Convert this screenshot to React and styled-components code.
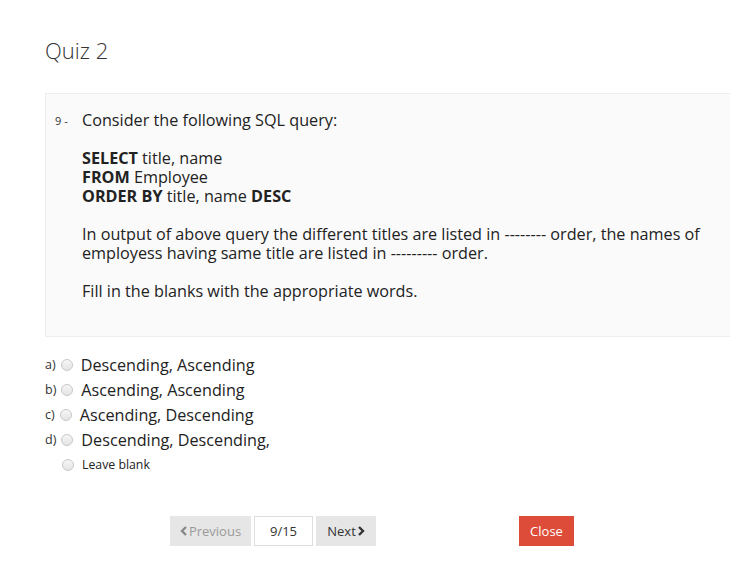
import React, { useState } from 'react';
import styled, { createGlobalStyle } from 'styled-components';

const GlobalStyle = createGlobalStyle`
    html, body {
        margin: 0;
        padding: 0;
        background: #fff;
        overflow-x: hidden;
    }
    body {
        font-family: 'Open Sans', 'Liberation Sans', sans-serif;
        color: #333;
    }
`;

const Page = styled.div`
    padding: 34px 0 0 45px;
`;

const Title = styled.h1`
    margin: 0;
    font: 300 22px/32px 'Open Sans', sans-serif;
    color: #333;
`;

const Panel = styled.div`
    margin-top: 27px;
    margin-right: -20px;
    background: #fafafa;
    border: 1px solid #eeeeee;
    padding: 17px 0 35px 9px;
    display: flex;
`;

const Number = styled.div`
    width: 27px;
    flex-shrink: 0;
    font-size: 11px;
    line-height: 19px;
    color: #333;
`;

const Body = styled.div`
    font-size: 16.2px;
    line-height: 19px;
    color: #222;
    padding-right: 40px;
    p {
        margin: 0 0 19px;
    }
    p:last-child {
        margin-bottom: 0;
    }
    b {
        font-weight: 700;
    }
`;

const Options = styled.div`
    margin-top: 15px;
    display: flex;
    flex-direction: column;
`;

const Option = styled.label`
    display: flex;
    align-items: center;
    height: 25px;
    cursor: pointer;
`;

const Letter = styled.span`
    font-size: 12.5px;
    color: #333;
    margin-right: 5px;
    width: ${p => p.$w || 'auto'};
`;

const Radio = styled.span`
    width: 12px;
    height: 12px;
    border-radius: 50%;
    box-sizing: border-box;
    border: 1px solid #c8c8c8;
    background: ${p => p.$on ? 'radial-gradient(circle, #555 0 3px, #f0f0f0 3.5px)' : 'linear-gradient(#f6f6f6, #e4e4e4)'};
    flex-shrink: 0;
`;

const OptText = styled.span`
    margin-left: 8px;
    font-size: ${p => p.$small ? '12.3px' : '16.2px'};
    color: #222;
`;

const Footer = styled.div`
    margin-top: 39px;
    padding-left: 125px;
    display: flex;
    align-items: center;
`;

const NavButton = styled.button`
    height: 30px;
    width: ${p => p.$w};
    padding: 0;
    border: none;
    background: #e6e6e6;
    color: ${p => p.$disabled ? '#9a9a9a' : '#333'};
    font: 400 13px 'Open Sans', sans-serif;
    display: flex;
    align-items: center;
    justify-content: center;
    gap: 1px;
    margin-right: 3px;
    cursor: ${p => p.$disabled ? 'default' : 'pointer'};
`;

const Counter = styled.div`
    height: 30px;
    width: 59px;
    box-sizing: border-box;
    border: 1px solid #dddddd;
    background: #fff;
    font-size: 13px;
    color: #333;
    display: flex;
    align-items: center;
    justify-content: center;
    margin-right: 3px;
`;

const CloseButton = styled.button`
    margin-left: 140px;
    height: 30px;
    width: 55px;
    padding: 0;
    border: none;
    background: #dd4b39;
    color: #fff;
    font: 400 13px 'Open Sans', sans-serif;
    cursor: pointer;
`;

const Chevron = ({ dir, color }) => (
    <svg width="8" height="10" viewBox="0 0 8 10">
        <path
            d={dir === 'left' ? 'M6 1 L2 5 L6 9' : 'M2 1 L6 5 L2 9'}
            fill="none"
            stroke={color}
            strokeWidth="2.4"
        />
    </svg>
);

const options = [
    { l: 'a)', t: 'Descending, Ascending' },
    { l: 'b)', t: 'Ascending, Ascending' },
    { l: 'c)', t: 'Ascending, Descending' },
    { l: 'd)', t: 'Descending, Descending,' },
];

const App = () => {
    const [picked, setPicked] = useState(null);

    return (
        <>
            <GlobalStyle />
            <Page>
                <Title>Quiz 2</Title>
                <Panel>
                    <Number>9 -</Number>
                    <Body>
                        <p>Consider the following SQL query:</p>
                        <p>
                            <b>SELECT</b> title, name<br />
                            <b>FROM</b> Employee<br />
                            <b>ORDER BY</b> title, name <b>DESC</b>
                        </p>
                        <p>In output of above query the different titles are listed in -------- order, the names of employess having same title are listed in --------- order.</p>
                        <p>Fill in the blanks with the appropriate words.</p>
                    </Body>
                </Panel>
                <Options>
                    {options.map((o, i) => (
                        <Option key={o.l} onClick={() => setPicked(i)}>
                            <Letter>{o.l}</Letter>
                            <Radio $on={picked === i} />
                            <OptText>{o.t}</OptText>
                        </Option>
                    ))}
                    <Option onClick={() => setPicked(4)}>
                        <Letter $w="12px" />
                        <Radio $on={picked === 4} />
                        <OptText $small>Leave blank</OptText>
                    </Option>
                </Options>
                <Footer>
                    <NavButton $disabled $w="81px">
                        <Chevron dir="left" color="#888" />Previous
                    </NavButton>
                    <Counter>9/15</Counter>
                    <NavButton $w="60px">
                        Next<Chevron dir="right" color="#333" />
                    </NavButton>
                    <CloseButton>Close</CloseButton>
                </Footer>
            </Page>
        </>
    );
};

export default App;
